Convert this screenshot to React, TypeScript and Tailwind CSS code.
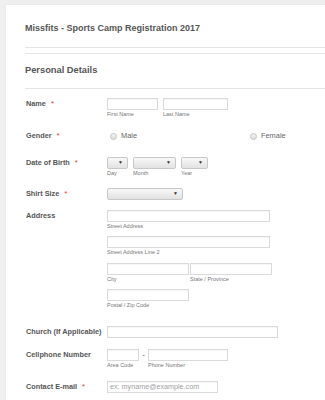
import React from 'react';

const font = { fontFamily: '"Liberation Sans", Arial, sans-serif' };

function Label({ text, required }: { text: string; required?: boolean }) {
  return (
    <div className="w-[81px] shrink-0 h-[12px] flex items-center text-[7.3px] font-bold text-[#555] whitespace-nowrap">
      {text}
      {required && <span className="text-[#e53935] ml-[5px] font-normal text-[8px]">*</span>}
    </div>
  );
}

function Input({ w, placeholder }: { w: number; placeholder?: string }) {
  return (
    <div
      className="h-[12px] bg-white border border-[#dadada] shadow-[inset_0_1px_1px_rgba(0,0,0,0.04)] flex items-center pl-[2px] text-[7.2px] text-[#a0a0a0] whitespace-nowrap"
      style={{ width: w }}
    >
      {placeholder}
    </div>
  );
}

function Sub({ text }: { text: string }) {
  return (
    <div className="h-[8px] flex items-center text-[5.5px] text-[#777] whitespace-nowrap">
      {text}
    </div>
  );
}

function Select({ w }: { w: number }) {
  return (
    <div
      className="h-[12px] rounded-[2px] border border-[#c8c8c8] bg-gradient-to-b from-[#f8f8f8] to-[#e2e2e2] flex items-center justify-end pr-[4px] text-[5px] text-[#333]"
      style={{ width: w }}
    >
      ▼
    </div>
  );
}

function Radio({ label }: { label: string }) {
  return (
    <div className="flex items-center h-[12px]">
      <div className="w-[7px] h-[7px] rounded-full border border-[#c4c4c4] bg-gradient-to-b from-[#f4f4f4] to-[#dcdcdc]" />
      <span className="ml-[4px] text-[7.4px] text-[#666]">{label}</span>
    </div>
  );
}

export default function App() {
  return (
    <div className="w-[325px] h-[400px] overflow-hidden bg-[#efefef] pt-[5px] pl-[6px]" style={font}>
      <div className="w-[340px] h-[420px] bg-white pl-[19px] shadow-[0_0_2px_rgba(0,0,0,0.06)]">
        {/* Header */}
        <div className="h-[42px] flex items-center pt-[6px] text-[9px] font-bold text-[#555]">
          Missfits - Sports Camp Registration 2017
        </div>
        <div className="border-t border-[#e6e6e6]" />
        <div className="mt-[5px] border-t border-[#e6e6e6]" />
        <div className="h-[34px] flex items-center text-[9.3px] font-bold text-[#555]">Personal Details</div>
        <div className="border-t border-[#e6e6e6]" />

        <div className="pl-[1px]">
          {/* Name */}
          <div className="flex mt-[9px]">
            <Label text="Name" required />
            <div className="flex gap-[5px]">
              <div>
                <Input w={51} />
                <Sub text="First Name" />
              </div>
              <div>
                <Input w={65} />
                <Sub text="Last Name" />
              </div>
            </div>
          </div>

          {/* Gender */}
          <div className="flex mt-[12px]">
            <Label text="Gender" required />
            <div className="flex w-[200px] pl-[3px]">
              <div className="w-[140px]">
                <Radio label="Male" />
              </div>
              <Radio label="Female" />
            </div>
          </div>

          {/* DOB */}
          <div className="flex mt-[15px]">
            <Label text="Date of Birth" required />
            <div className="flex gap-[5px]">
              <div>
                <Select w={21} />
                <Sub text="Day" />
              </div>
              <div>
                <Select w={43} />
                <Sub text="Month" />
              </div>
              <div>
                <Select w={27} />
                <Sub text="Year" />
              </div>
            </div>
          </div>

          {/* Shirt */}
          <div className="flex mt-[11px]">
            <Label text="Shirt Size" required />
            <Select w={76} />
          </div>

          {/* Address */}
          <div className="flex mt-[10px]">
            <Label text="Address" />
            <div>
              <Input w={163} />
              <Sub text="Street Address" />
              <div className="mt-[6px]">
                <Input w={163} />
                <Sub text="Street Address Line 2" />
              </div>
              <div className="flex gap-[1px] mt-[7px]">
                <div>
                  <Input w={82} />
                  <Sub text="City" />
                </div>
                <div>
                  <Input w={82} />
                  <Sub text="State / Province" />
                </div>
              </div>
              <div className="mt-[6px]">
                <Input w={82} />
                <Sub text="Postal / Zip Code" />
              </div>
            </div>
          </div>

          {/* Church */}
          <div className="flex mt-[17px]">
            <Label text="Church (If Applicable)" />
            <Input w={171} />
          </div>

          {/* Cellphone */}
          <div className="flex mt-[11px]">
            <Label text="Cellphone Number" />
            <div className="flex">
              <div>
                <Input w={32} />
                <Sub text="Area Code" />
              </div>
              <div className="w-[9px] h-[12px] flex items-center justify-center text-[8px] text-[#666]">-</div>
              <div>
                <Input w={80} />
                <Sub text="Phone Number" />
              </div>
            </div>
          </div>

          {/* Email */}
          <div className="flex mt-[12px]">
            <Label text="Contact E-mail" required />
            <Input w={111} placeholder="ex: myname@example.com" />
          </div>
        </div>
      </div>
    </div>
  );
}
